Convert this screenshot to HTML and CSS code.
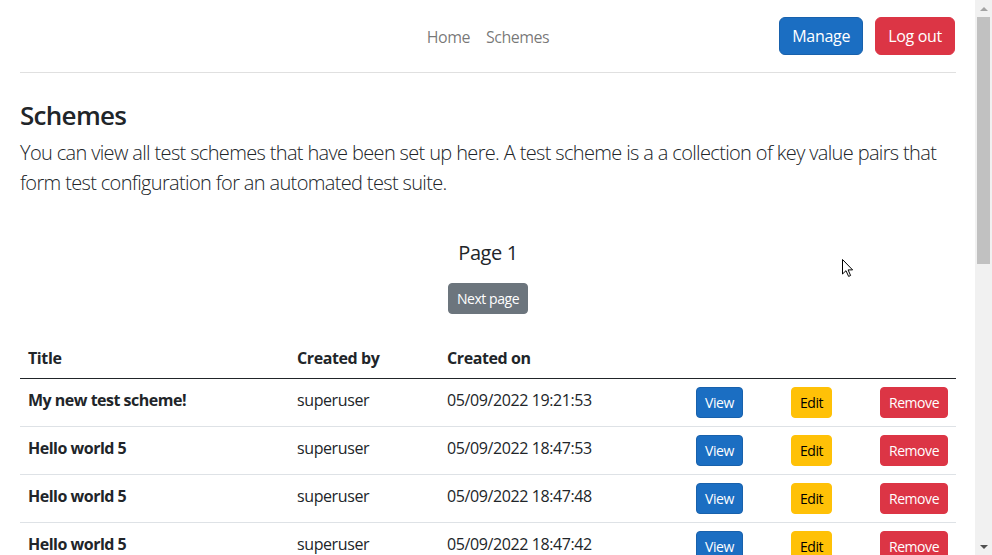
FILE: index.html
```html
<!DOCTYPE html>
<html lang="en">
<head>
<meta charset="utf-8">
<title>Schemes</title>
<link rel="stylesheet" href="styles.css">
</head>
<body>
<div class="window">
  <div class="page">
    <header class="topbar">
      <div class="topbar-spacer"></div>
      <nav class="nav">
        <a class="nav-link" href="#">Home</a>
        <a class="nav-link" href="#">Schemes</a>
      </nav>
      <div class="actions">
        <button class="btn btn-primary">Manage</button>
        <button class="btn btn-danger">Log out</button>
      </div>
    </header>
    <main class="main">
      <h3 class="title">Schemes</h3>
      <p class="lead">You can view all test schemes that have been set up here. A test scheme is a a collection of key value pairs that form test configuration for an automated test suite.</p>
      <div class="pager">
        <h5 class="page-label">Page 1</h5>
        <button class="btn btn-sm btn-secondary">Next page</button>
      </div>
      <table class="table">
        <colgroup>
          <col class="c-title"><col class="c-by"><col class="c-on"><col class="c-view"><col class="c-edit"><col class="c-remove">
        </colgroup>
        <thead>
          <tr><th>Title</th><th>Created by</th><th>Created on</th><th></th><th></th><th></th></tr>
        </thead>
        <tbody>
          <tr><td class="name">My new test scheme!</td><td>superuser</td><td>05/09/2022 19:21:53</td><td><button class="btn btn-sm btn-primary">View</button></td><td><button class="btn btn-sm btn-warning">Edit</button></td><td><button class="btn btn-sm btn-danger">Remove</button></td></tr>
          <tr><td class="name">Hello world 5</td><td>superuser</td><td>05/09/2022 18:47:53</td><td><button class="btn btn-sm btn-primary">View</button></td><td><button class="btn btn-sm btn-warning">Edit</button></td><td><button class="btn btn-sm btn-danger">Remove</button></td></tr>
          <tr><td class="name">Hello world 5</td><td>superuser</td><td>05/09/2022 18:47:48</td><td><button class="btn btn-sm btn-primary">View</button></td><td><button class="btn btn-sm btn-warning">Edit</button></td><td><button class="btn btn-sm btn-danger">Remove</button></td></tr>
          <tr><td class="name">Hello world 5</td><td>superuser</td><td>05/09/2022 18:47:42</td><td><button class="btn btn-sm btn-primary">View</button></td><td><button class="btn btn-sm btn-warning">Edit</button></td><td><button class="btn btn-sm btn-danger">Remove</button></td></tr>
        </tbody>
      </table>
    </main>
    <svg class="cursor" width="13" height="20" viewBox="0 0 13 20" aria-hidden="true">
      <path d="M1.5 1.5 L1.5 16 L5 12.7 L7.6 18.4 L9.6 17.5 L7.1 11.9 L11.6 11.9 Z" fill="#fff" stroke="#000" stroke-width="1" stroke-linejoin="round"/>
    </svg>
  </div>
  <div class="scrollbar">
    <div class="sb-arrow sb-up"></div>
    <div class="sb-track"><div class="sb-thumb"></div></div>
    <div class="sb-arrow sb-down"></div>
  </div>
</div>
</body>
</html>
```
FILE: styles.css
```css
* { box-sizing: border-box; }
html, body {
  margin: 0;
  padding: 0;
  height: 555px;
  overflow: hidden;
  background: #fff;
}
body {
  font-family: "Open Sans", "Noto Sans", "Liberation Sans", sans-serif;
  font-size: 16px;
  line-height: 1.5;
  color: #212529;
  letter-spacing: -0.4px;
}
.window {
  display: flex;
  height: 555px;
}
.page {
  position: relative;
  flex: 1;
  padding: 0 19px 0 20px;
  overflow: hidden;
}
.topbar {
  display: grid;
  grid-template-columns: 1fr auto 1fr;
  align-items: center;
  padding: 17px 0 17px;
  border-bottom: 1px solid #e0e0e0;
}
.nav {
  display: flex;
  padding-top: 2px;
}
.nav-link {
  color: rgba(0, 0, 0, 0.55);
  text-decoration: none;
  padding: 0 8px;
  font-size: 16px;
  letter-spacing: -0.5px;
}
.actions {
  display: flex;
  justify-content: flex-end;
  gap: 12px;
  padding-right: 1px;
}
.btn {
  font-family: inherit;
  font-size: 16px;
  line-height: 1.5;
  letter-spacing: -0.3px;
  padding: 6px 12px;
  border: 1px solid transparent;
  border-radius: 6px;
  color: #fff;
  cursor: pointer;
}
.btn-sm {
  font-size: 14px;
  padding: 4px 8px;
  border-radius: 4px;
  letter-spacing: -0.45px;
}
.btn-primary { background: #1b6ec2; border-color: #1861ac; }
.btn-danger { background: #dc3545; border-color: #dc3545; }
.btn-secondary { background: #6c757d; border-color: #6c757d; }
.btn-warning { background: #ffc107; border-color: #ffc107; color: #000; }

.main {
  padding-top: 27px;
}
.title {
  margin: 0 0 7px;
  font-size: 26px;
  font-weight: 600;
  line-height: 1.2;
  letter-spacing: -0.7px;
}
.lead {
  margin: 0 0 16px;
  font-size: 20px;
  font-weight: 300;
  line-height: 1.5;
  letter-spacing: -0.65px;
}
.pager {
  display: flex;
  flex-direction: column;
  align-items: center;
  padding-top: 27px;
}
.page-label {
  margin: 0 0 18px;
  font-size: 20px;
  font-weight: 400;
  line-height: 1.2;
  letter-spacing: -0.4px;
}
.table {
  width: 100%;
  border-collapse: collapse;
  table-layout: fixed;
  margin-top: 24px;
}
.c-title { width: 269px; }
.c-by { width: 150px; }
.c-on { width: 249px; }
.c-view { width: 95px; }
.c-edit { width: 89px; }
.c-remove { width: 84px; }
.table th, .table td {
  padding: 8px;
  text-align: left;
  vertical-align: top;
  white-space: nowrap;
}
.table th {
  font-weight: 700;
  border-bottom: 1px solid #212529;
}
.table td {
  border-bottom: 1px solid #dee2e6;
  padding-top: 9px;
}
.table td .btn { margin-top: -1px; }
.table td.name { font-weight: 700; letter-spacing: -0.5px; }

.cursor {
  position: absolute;
  left: 841px;
  top: 258px;
}

.scrollbar {
  width: 17px;
  flex: none;
  background: #f1f1f1;
  display: flex;
  flex-direction: column;
}
.sb-arrow {
  height: 17px;
  flex: none;
  display: flex;
  align-items: center;
  justify-content: center;
}
.sb-up::before, .sb-down::before {
  content: "";
  width: 0;
  height: 0;
  border-left: 4px solid transparent;
  border-right: 4px solid transparent;
}
.sb-up::before { border-bottom: 4px solid #a3a3a3; }
.sb-down::before { border-top: 4px solid #505050; }
.sb-track {
  flex: 1;
  padding: 0 2px;
}
.sb-thumb {
  height: 247px;
  background: #c1c1c1;
}
```
